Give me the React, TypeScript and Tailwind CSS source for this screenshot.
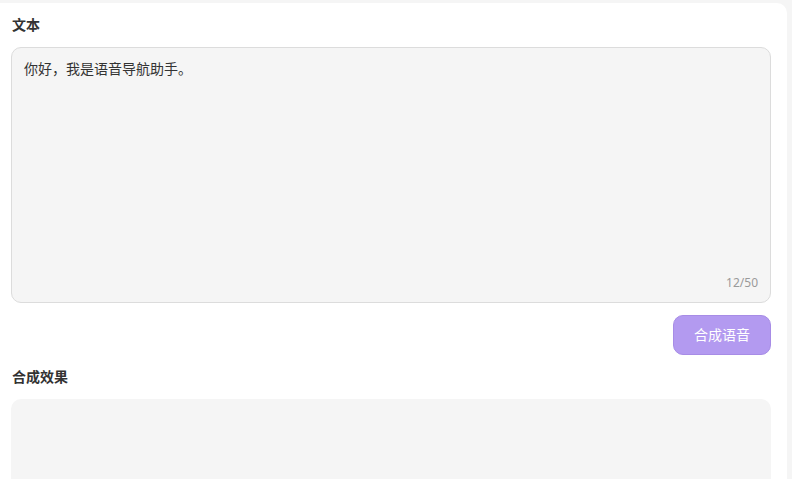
export default function App() {
  return (
    <div
      className="min-h-screen w-full bg-[#f5f5f5] pt-[3px] pr-[5px] overflow-hidden"
      style={{ height: 479 }}
    >
      <div
        className="w-[787px] h-[600px] bg-white rounded-tr-[10px] pl-[11px] pr-4 pt-[12px] text-[#333]"
        style={{ fontFamily: '"Noto Sans", "Noto Sans CJK SC", sans-serif' }}
      >
        <div className="text-sm font-bold leading-5 pl-px">文本</div>
        <div className="mt-3 h-[256px] rounded-[10px] border border-[#dcdcdc] bg-[#f5f5f5] flex flex-col px-3 pt-[10px] pb-[11px]">
          <div className="flex-1 text-sm leading-[22px]">你好，我是语音导航助手。</div>
          <div className="self-end text-xs leading-4 text-[#9a9a9a]">12/50</div>
        </div>
        <div className="flex justify-end mt-[12px]">
          <button className="w-[98px] h-10 rounded-[10px] border border-[#a78ce6] bg-[#b39af0] text-sm text-white">
            合成语音
          </button>
        </div>
        <div className="mt-3 text-sm font-bold leading-5 pl-px">合成效果</div>
        <div className="mt-3 h-[200px] rounded-[10px] bg-[#f5f5f5]" />
      </div>
    </div>
  );
}
